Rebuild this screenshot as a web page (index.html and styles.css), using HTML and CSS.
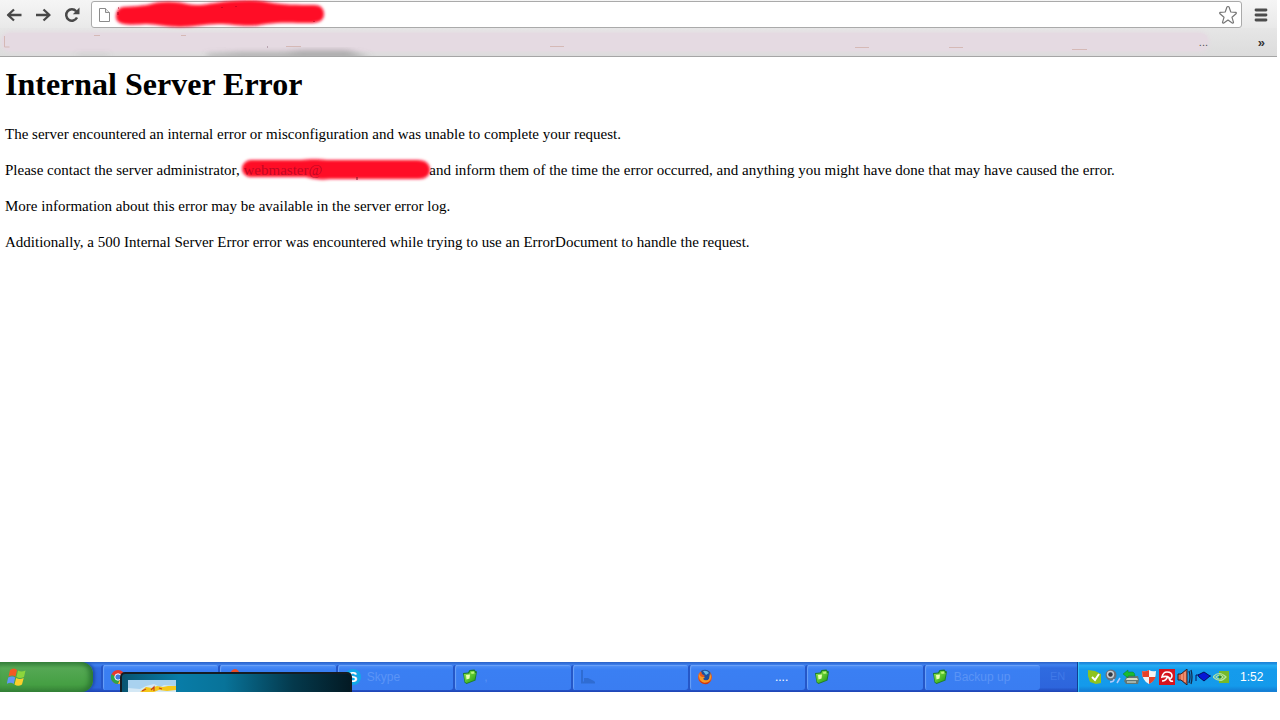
FILE: index.html
```
<!DOCTYPE html>
<html lang="en">

<head>
 <meta charset="UTF-8">
 <meta name="viewport" content="width=device-width, initial-scale=1.0">
 <title>500 Internal Server Error</title>
 <link rel="stylesheet" href="styles.css">
</head>

<body>
 <!-- shared icons -->
 <svg class="defs" aria-hidden="true">
  <defs>
   <filter id="soft" x="-10%" y="-50%" width="120%" height="200%">
    <feGaussianBlur stdDeviation="1.7" />
   </filter>
   <filter id="smudge" x="-10%" y="-50%" width="120%" height="200%">
    <feGaussianBlur stdDeviation="3" />
   </filter>
   <linearGradient id="leaf" x1="0" y1="0" x2="1" y2="1">
    <stop offset="0" stop-color="#9aee4c" />
    <stop offset="1" stop-color="#1c9a14" />
   </linearGradient>
   <symbol id="folder" viewBox="0 0 16 16">
    <path d="M1 4l5-.500 1.500-2.500 5-.500 1 1.500 1.500 .500-1.500 9-9 3.500-2-1.500z" fill="#1d7d2c" />
    <path d="M2 5l5-.500 1.500-2.500 4 0 .500 2 1 0-1.500 7-8 3-1.500-1z" fill="url(#leaf)" />
    <path d="M4 6l4-.500-.500 4-3 1z" fill="#e9ffb4" />
    <path d="M9 3l3-.500 .500 2-3 .500z" fill="#b9f47c" />
   </symbol>
  </defs>
 </svg>

 <div class="browser">
  <div class="toolbar">
   <div class="nav">
    <button class="icon-btn" aria-label="Back">
     <svg width="16" height="16" viewBox="0 0 16 16" fill="none" stroke="#484848" stroke-width="2.300">
      <path d="M15.500 8H2M8 2.500L2 8l6 5.500" stroke-linejoin="round" />
     </svg>
    </button>
    <button class="icon-btn" aria-label="Forward">
     <svg width="16" height="16" viewBox="0 0 16 16" fill="none" stroke="#484848" stroke-width="2.300">
      <path d="M1 8h13.500M8.500 2.500l6 5.500-6 5.500" stroke-linejoin="round" />
     </svg>
    </button>
    <button class="icon-btn" aria-label="Reload">
     <svg width="16" height="16" viewBox="0 0 16 16">
      <path d="M13 10.500a5.700 5.700 0 1 1-.800-6.300" fill="none" stroke="#484848" stroke-width="2.500" />
      <path d="M15.500 .500v6.800H8.800z" fill="#484848" />
     </svg>
    </button>
   </div>
   <div class="address">
    <svg class="page-icon" width="13" height="16" viewBox="0 0 13 16" fill="#fff" stroke="#8b8b8b">
     <path d="M1.500 1.500h6l4 4v9h-10z" />
     <path d="M7.500 1.500v4h4" fill="#e6e6e6" />
    </svg>
    <div class="url">
     <input type="text" aria-label="Address">
     <svg class="scribble" width="220" height="32" viewBox="0 0 220 32">
      <path filter="url(#soft)" fill="#ff0a28" d="M12 8C24 7 32 7 40 5c10-3 24-3 36 0 12 3 22-1 44-3 14-1 28-1 36 1 14 3 32 3 47 3 8 0 10 5 10 9 0 7-6 9-14 9-17 0-30-1-44 1-20 4-30 0-48 0-13 0-24 3-38 3-14 0-24-3-34-3-16 1-30 2-30-7 0-5 2-9 7-10z" />
      <path d="M7 9h1M7 13v3M111 8v1M125 7v1M203 22v1" stroke="#a8001c" />
     </svg>
    </div>
    <button class="icon-btn" aria-label="Bookmark this page">
     <svg width="20" height="20" viewBox="0 0 20 20" fill="#fff" stroke="#777" stroke-width="1.200" stroke-linejoin="round">
      <path d="M10 1.500q1 0 1.200 1l1.600 4.500 5 .300q1 .500 .200 1.500l-4 3.500 1.500 5q-.200 1.200-1.300 .700L10 15l-4.200 3q-1.100 .500-1.300-.700L6 12.300 2 8.800q-.800-1 .200-1.500l5-.300L8.800 2.500q.200-1 1.200-1z" />
     </svg>
    </button>
   </div>
   <button class="icon-btn menu-btn" aria-label="Menu">
    <svg width="14" height="14" viewBox="0 0 14 14" stroke="#4c4c4c" stroke-width="2.800" stroke-linecap="round">
     <path d="M2 2h10M2 7h10M2 12h10" />
    </svg>
   </button>
  </div>

  <div class="bookmarks">
   <div class="bookmark-list">
    <svg class="marks" width="1100" height="28" viewBox="0 0 1100 28" fill="none" stroke="#d5b9b6">
     <path d="M2.500 8v11h5M92 7.500h6M179 7.500h5M284 18.500h15M548 18.500h14M853 19.500h14M947 19.500h14M1070 21.500h15" />
     <path d="M265 19h1" stroke="#907080" />
     <g filter="url(#smudge)" stroke="none">
      <path d="M205 30v-3l35-2h42l18-2h45l25 7z" fill="#777" opacity=".6" />
      <path d="M75 29h32v-2H75z" fill="#777" opacity=".3" />
     </g>
    </svg>
    <span class="dots">...</span>
   </div>
   <button class="icon-btn more" aria-label="More bookmarks">»</button>
  </div>

  <main class="page">
   <h1>Internal Server Error</h1>
   <p>The server encountered an internal error or misconfiguration and was unable to complete your request.</p>
   <p>Please contact the server administrator, <span class="mail"><svg class="scribble" width="196" height="32" viewBox="0 0 196 32">
      <path filter="url(#soft)" fill="#ff0a28" d="M13 6h50c8-1 18-1 26 0h90c9 0 13 4 13 10 0 6-5 9-11 9H92c-9 1-17 0-24-2H14C1 23 1 7 13 6z" />
      <path d="M119 23v3" stroke="#7a1024" />
     </svg><span class="mail-text">webmaster@</span></span> and inform them of the time the error occurred, and anything you might have done that may have caused the error.</p>
   <p>More information about this error may be available in the server error log.</p>
   <p>Additionally, a 500 Internal Server Error error was encountered while trying to use an ErrorDocument to handle the request.</p>
  </main>
 </div>

 <div class="taskbar">
  <button class="start" aria-label="Start">
   <svg width="20" height="20" viewBox="0 0 20 20">
    <path d="M3 3q4-3 7 0L8.500 9.500q-3-2-7 0z" fill="#f25a22" />
    <path d="M11 3.500q3 2 7.500 0L17 10q-4 2-7.500 0z" fill="#8cd63c" />
    <path d="M1.200 10.500q4-2 7 0L6.700 17q-3-2.500-7 0z" fill="#6297f5" />
    <path d="M9.200 11q3.500 2 7.500 0L15 17.500q-4 2.500-7.500 0z" fill="#fccf2c" />
   </svg>
  </button>
  <div class="windows">
   <button class="task" aria-label="Chrome">
    <svg width="16" height="16" viewBox="0 0 16 16">
     <circle cx="8" cy="8" r="7" fill="#e8392c" />
     <path d="M1.500 5A7 7 0 0 0 8 15l2-5-4-2z" fill="#2fa548" />
     <path d="M15 7a7 7 0 0 1-7 8l3-6z" fill="#fbd23a" />
     <circle cx="8" cy="8" r="3.200" fill="#3f7be0" stroke="#fff" />
    </svg>
   </button>
   <button class="task" aria-label="Browser">
    <svg width="16" height="16" viewBox="0 0 16 16">
     <ellipse cx="8" cy="7" rx="5" ry="7" fill="#ef4c25" />
    </svg>
   </button>
   <button class="task">
    <b class="skype">S</b><span class="faded">Skype</span>
   </button>
   <button class="task" aria-label="Folder">
    <svg width="16" height="16"><use href="#folder" /></svg><span class="faded">,</span>
   </button>
   <button class="task" aria-label="Window">
    <svg width="16" height="16" viewBox="0 0 16 16" fill="none" stroke="#2f6cd2">
     <path d="M2 1v12.500H15" stroke-width="2" />
     <path d="M4 9l4 0 6 3v2H4z" fill="#2f6cd2" stroke="none" />
    </svg>
   </button>
   <button class="task" aria-label="Firefox">
    <svg width="16" height="16" viewBox="0 0 16 16">
     <circle cx="8" cy="8" r="7" fill="#e9581b" />
     <path d="M4 2q5-3 9 1 2 5-2 8-4 1-6-2l3-2-3-2z" fill="#1d4f9e" />
     <path d="M6 2q4-1 6 2l-3 2z" fill="#63b8e8" />
     <path d="M2 3q0 4 3 5l3 0-2 2q3 3 6 0l1-6q3 6-2 9-5 2-8-2-2-4-1-8z" fill="#f59a25" />
     <path d="M1 6q0 6 6 8 5 0 7-3-2 5-7 4-6-2-6-9z" fill="#c93414" />
    </svg>
    <span class="dotted">....</span>
   </button>
   <button class="task" aria-label="Folder">
    <svg width="16" height="16"><use href="#folder" /></svg>
   </button>
   <button class="task">
    <svg width="16" height="16"><use href="#folder" /></svg><span class="faded">Backup up</span>
   </button>
  </div>
  <div class="lang">EN</div>
  <div class="tray">
   <div class="tray-icons">
    <svg width="16" height="16" viewBox="0 0 16 16">
     <path d="M1 1l7 1 6 3v9l-5 1-6-2-2-6z" fill="#8fc31f" />
     <path d="M5 8l3 3 4-6" fill="none" stroke="#fff" stroke-width="2" />
    </svg>
    <svg width="16" height="16" viewBox="0 0 16 16">
     <circle cx="6" cy="6" r="5.500" fill="#69717c" />
     <circle cx="5.500" cy="5.500" r="3.700" fill="#c9cfd4" />
     <circle cx="5.500" cy="5.500" r="2.200" fill="#303946" />
     <path d="M9 10q0 3-4 3M12 14l3-5" fill="none" stroke="#b5cafa" stroke-width="1.500" />
    </svg>
    <svg width="16" height="16" viewBox="0 0 16 16">
     <path d="M4 7h11l1 4-1 4H3l-2-3z" fill="#637774" />
     <path d="M4 9h10l1 2H3z" fill="#d7ddc8" />
     <path d="M0 5l5-4v2h5q2 1 2 4H5v2z" fill="#18bc32" stroke="#087a30" stroke-width=".500" />
     <path d="M4 13h9" stroke="#e3eee0" />
    </svg>
    <svg width="16" height="16" viewBox="0 0 16 16">
     <path d="M1 2q4 1 7-1 3 2 7 1 0 10-7 13Q1 12 1 2z" fill="#f3f3f3" />
     <path d="M1 2q4 1 7-1v7H1.500zM8 8h6.500Q13 13 8 15z" fill="#e5422a" />
    </svg>
    <svg width="16" height="16" viewBox="0 0 16 16">
     <path d="M0 0h16v16H0z" fill="#d6141e" />
     <path d="M3 8Q4 3 8 3q5 0 5 4 0 2-2 3Q9 6 3 8zM9 7q-2 5-6 5M10 9q1 4 4 3" fill="none" stroke="#fff" stroke-width="1.600" />
    </svg>
    <svg width="16" height="16" viewBox="0 0 16 16">
     <path d="M1 5h3l6-5v16l-6-5H1z" fill="#db6848" stroke="#321f24" />
     <path d="M5 5v6M8 3v10" stroke="#ffb496" />
     <path d="M12 2q2 6 0 12M14 1q2 7 0 14" fill="none" stroke="#152b4c" stroke-width="1.300" />
    </svg>
    <svg width="16" height="16" viewBox="0 0 16 16">
     <path d="M3 6l6-3 6 4-6 5-5-4z" fill="#0717d6" stroke="#04105e" />
     <path d="M4 6H1v6M15 7h1" fill="none" stroke="#04105e" />
    </svg>
    <svg width="16" height="16" viewBox="0 0 16 16">
     <path d="M6 2h10v12H6z" fill="#76b82a" />
     <path d="M0 8q6-7 13 0-6 7-13 0zM3 8q4-4 7 0-4 4-7 0z" fill="none" stroke="#b4e5a0" stroke-width="1.200" />
     <circle cx="7" cy="8" r="1.500" fill="#32872c" />
    </svg>
   </div>
   <time>1:52</time>
  </div>

  <div class="popup">
   <svg width="48" height="12" viewBox="0 0 48 12">
    <path d="M0 0h48v12H0z" fill="#a9d2ef" />
    <path d="M0 8l12 1 6-3 8-2 6 3 4-2 12 1v6H0z" fill="#d4e8f5" />
    <path d="M12 12l6-5 6 1 5-2 6 1 5-1 8 0v4l-9 1-8-1-5 2z" fill="#f5c81b" />
    <path d="M23 10l3-3 0 4M14 11l4-2M31 8l3 1" fill="none" stroke="#c4411e" stroke-width="1.200" />
   </svg>
  </div>
 </div>
</body>

</html>
```
FILE: styles.css
```
* {
 box-sizing: border-box;
}

body {
 margin: 0;
 min-height: 100vh;
 padding: 0 3px 28px 0;
 display: flex;
 flex-direction: column;
 background: #fff;
 color: #000;
 font-family: "Liberation Serif", "Times New Roman", serif;
}

button {
 margin: 0;
 padding: 0;
 border: none;
 background: none;
 font: inherit;
 cursor: pointer;
}

svg {
 display: block;
 flex: none;
}

.defs {
 position: absolute;
 width: 0;
 height: 0;
}

.browser {
 flex: 1;
}

/* browser toolbar */
.toolbar {
 display: flex;
 align-items: center;
 height: 28px;
 padding: 1px 0 0 6px;
 background: linear-gradient(#f5f5f5, #e9e9e9);
}

.nav {
 display: flex;
 gap: 13px;
 width: 85px;
}

.address {
 flex: 1;
 display: flex;
 align-items: center;
 height: 27px;
 padding: 0 3px 0 6px;
 background: #fff;
 border: 1px solid #aaa;
 border-radius: 3px;
}

.url {
 position: relative;
 flex: 1;
}

.url input {
 width: 100%;
 padding: 0 8px;
 border: none;
 outline: none;
 background: none;
 font: 14px "Liberation Sans", Arial, sans-serif;
}

.url .scribble {
 position: absolute;
 left: 0;
 top: -7px;
}

.menu-btn {
 padding: 0 9px 0 12px;
}

.bookmarks {
 display: flex;
 align-items: center;
 justify-content: space-between;
 height: 29px;
 padding: 0 12px 0 2px;
 background: linear-gradient(#e6e6e6, #dcdcdc);
 border-bottom: 1px solid #a5a5a5;
 overflow: hidden;
}

.bookmark-list {
 display: flex;
 justify-content: space-between;
 align-items: center;
 width: 1206px;
 height: 18px;
 background: #e5dae2;
 border-radius: 8px;
 box-shadow: 0 0 4px 1px #e5dae2;
}

.dots {
 color: #555;
 font: 11px "Liberation Sans", Arial, sans-serif;
}

.more {
 color: #333;
 font: bold 13px "Liberation Sans", Arial, sans-serif;
}

/* error page */
.page {
 padding: 8px 5px;
 font-size: 15px;
 line-height: 18px;
}

.page h1 {
 margin: 0 0 22px;
 font-size: 32px;
 line-height: 38px;
}

.page p {
 margin: 0 0 18px;
}

.mail {
 position: relative;
 display: inline-block;
 width: 182px;
}

.mail .scribble {
 position: absolute;
 left: -5px;
 top: -7px;
}

.mail-text {
 position: relative;
 color: rgba(110, 0, 30, 0.45);
}

/* taskbar */
.taskbar {
 position: relative;
 display: flex;
 height: 30px;
 background: linear-gradient(#2a62c6, #3f80ee 10%, #2f6be0 20%, #2d65dc 85%, #1d43b4);
 overflow: hidden;
}

.start {
 width: 93px;
 padding-left: 7px;
 background: linear-gradient(#3c8540, #55a854 20%, #459f43 75%, #388538);
 border-radius: 0 12px 12px 0;
 box-shadow: inset -4px 0 5px #2c7833, 2px 0 3px #1e4daa;
}

.windows {
 flex: 1;
 display: grid;
 grid-template-columns: repeat(8, 1fr);
 padding: 3px 0 2px 8px;
}

.task {
 display: flex;
 align-items: center;
 gap: 6px;
 padding: 0 0 2px 7px;
 background: linear-gradient(#4f8ff6, #3a7ff3 20%, #3a7df1);
 border-left: 2px solid #2557c8;
 border-radius: 3px;
 box-shadow: inset 1px 1px 1px #6ca2f8;
 color: #fff;
 font: 12px "Liberation Sans", Arial, sans-serif;
 overflow: hidden;
}

.skype {
 width: 16px;
 background: #12a9e8;
 border-radius: 8px;
 font-size: 14px;
}

.faded {
 color: #5a94f6;
}

.dotted {
 margin-left: 56px;
}

.lang {
 width: 37px;
 padding: 8px 10px;
 color: #4079e8;
 font: 11px "Liberation Sans", Arial, sans-serif;
}

.tray {
 display: flex;
 align-items: center;
 width: 200px;
 padding: 0 0 0 9px;
 background: linear-gradient(#1877d0, #25adf4 12%, #159bec 25%, #149aeb 80%, #1378d0);
 border-left: 1px solid #103f92;
 box-shadow: inset 1px 0 1px #37c4fa;
 color: #fff;
 font: 12px "Liberation Sans", Arial, sans-serif;
}

.tray-icons {
 display: flex;
 gap: 2px;
 width: 153px;
}

/* toast sliding up over the window buttons */
.popup {
 position: absolute;
 left: 120px;
 bottom: 0;
 width: 232px;
 height: 20px;
 padding: 6px 6px 0;
 background: linear-gradient(90deg, #075471, #087ca7 25%, #087399 45%, #04394c 75%, #031a24);
 border: 2px solid #141c22;
 border-bottom: none;
 border-radius: 5px 5px 0 0;
}
```
